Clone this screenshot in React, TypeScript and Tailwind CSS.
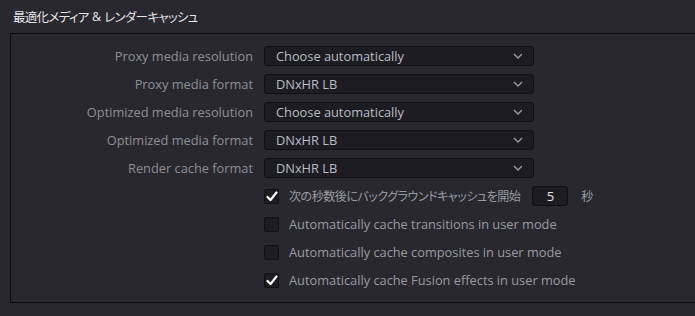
const font = "font-['Open_Sans','Noto_Sans_CJK_JP',sans-serif]";
const jp = "[font-feature-settings:'palt'] font-['Noto_Sans_CJK_JP',sans-serif]";

function Chevron() {
  return (
    <svg width="10" height="6" viewBox="0 0 10 6" className="shrink-0">
      <path d="M1 1 L5 5 L9 1" fill="none" stroke="#9a9a9f" strokeWidth="1.4" />
    </svg>
  );
}

function Select({ value }: { value: string }) {
  return (
    <div className="flex h-[20px] w-[270px] items-center justify-between rounded-[3px] border border-[#111114] bg-[#1d1d21] pl-[11px] pr-[10px] text-[12.8px] text-[#b8bcc4]">
      <span className="pt-[1px]">{value}</span>
      <Chevron />
    </div>
  );
}

function Check({ on }: { on: boolean }) {
  return (
    <div className="flex h-[15px] w-[15px] shrink-0 items-center justify-center rounded-[2px] border border-[#111114] bg-[#1d1d21]">
      {on && (
        <svg width="12" height="11" viewBox="0 0 12 11">
          <path d="M1.5 6 L4.5 9 L10.5 1.5" fill="none" stroke="#ffffff" strokeWidth="2.2" strokeLinecap="round" strokeLinejoin="round" />
        </svg>
      )}
    </div>
  );
}

const selects = [
  ["Proxy media resolution", "Choose automatically"],
  ["Proxy media format", "DNxHR LB"],
  ["Optimized media resolution", "Choose automatically"],
  ["Optimized media format", "DNxHR LB"],
  ["Render cache format", "DNxHR LB"],
];

const checks: [string, boolean][] = [
  ["Automatically cache transitions in user mode", false],
  ["Automatically cache composites in user mode", false],
  ["Automatically cache Fusion effects in user mode", true],
];

export default function App() {
  return (
    <div className={`h-[316px] w-[695px] overflow-hidden bg-[#28282e] ${font}`}>
      <div className={`flex h-[33px] items-center whitespace-pre pl-[13px] pt-[2px] text-[12.5px] tracking-[-0.7px] text-[#e4e4e6] ${jp}`}>
        最適化メディア<span className="font-['Open_Sans',sans-serif] tracking-normal"> &amp; </span>レンダーキャッシュ
      </div>
      <div className="ml-[10px] mr-[-20px] h-[270px] border border-[#0c0c0e] pt-[12px]">
        <div className="grid grid-cols-[242px_1fr] gap-x-[11px] gap-y-[8px]">
          {selects.map(([label, value]) => (
            <div key={label} className="contents">
              <div className="flex h-[20px] items-center justify-end pt-[1px] text-[12.8px] text-[#8e8f96]">{label}</div>
              <Select value={value} />
            </div>
          ))}

          <div />
          <div className="flex h-[20px] items-center text-[13px] text-[#9a9ba2]">
            <Check on />
            <span className={`ml-[10px] text-[12px] tracking-[-0.45px] ${jp}`}>次の秒数後にバックグラウンドキャッシュを開始</span>
            <div className="ml-[12px] flex h-[20px] w-[36px] shrink-0 items-center justify-center rounded-[3px] border border-[#111114] bg-[#1d1d21] pt-[1px] text-[#e6e6ea]">
              5
            </div>
            <span className={`ml-[13px] text-[12px] ${jp}`}>秒</span>
          </div>

          {checks.map(([label, on]) => (
            <div key={label} className="contents">
              <div />
              <div className="flex h-[20px] items-center pt-[1px] text-[12.8px] text-[#9a9ba2]">
                <Check on={on} />
                <span className="ml-[10px]">{label}</span>
              </div>
            </div>
          ))}
        </div>
      </div>
    </div>
  );
}
